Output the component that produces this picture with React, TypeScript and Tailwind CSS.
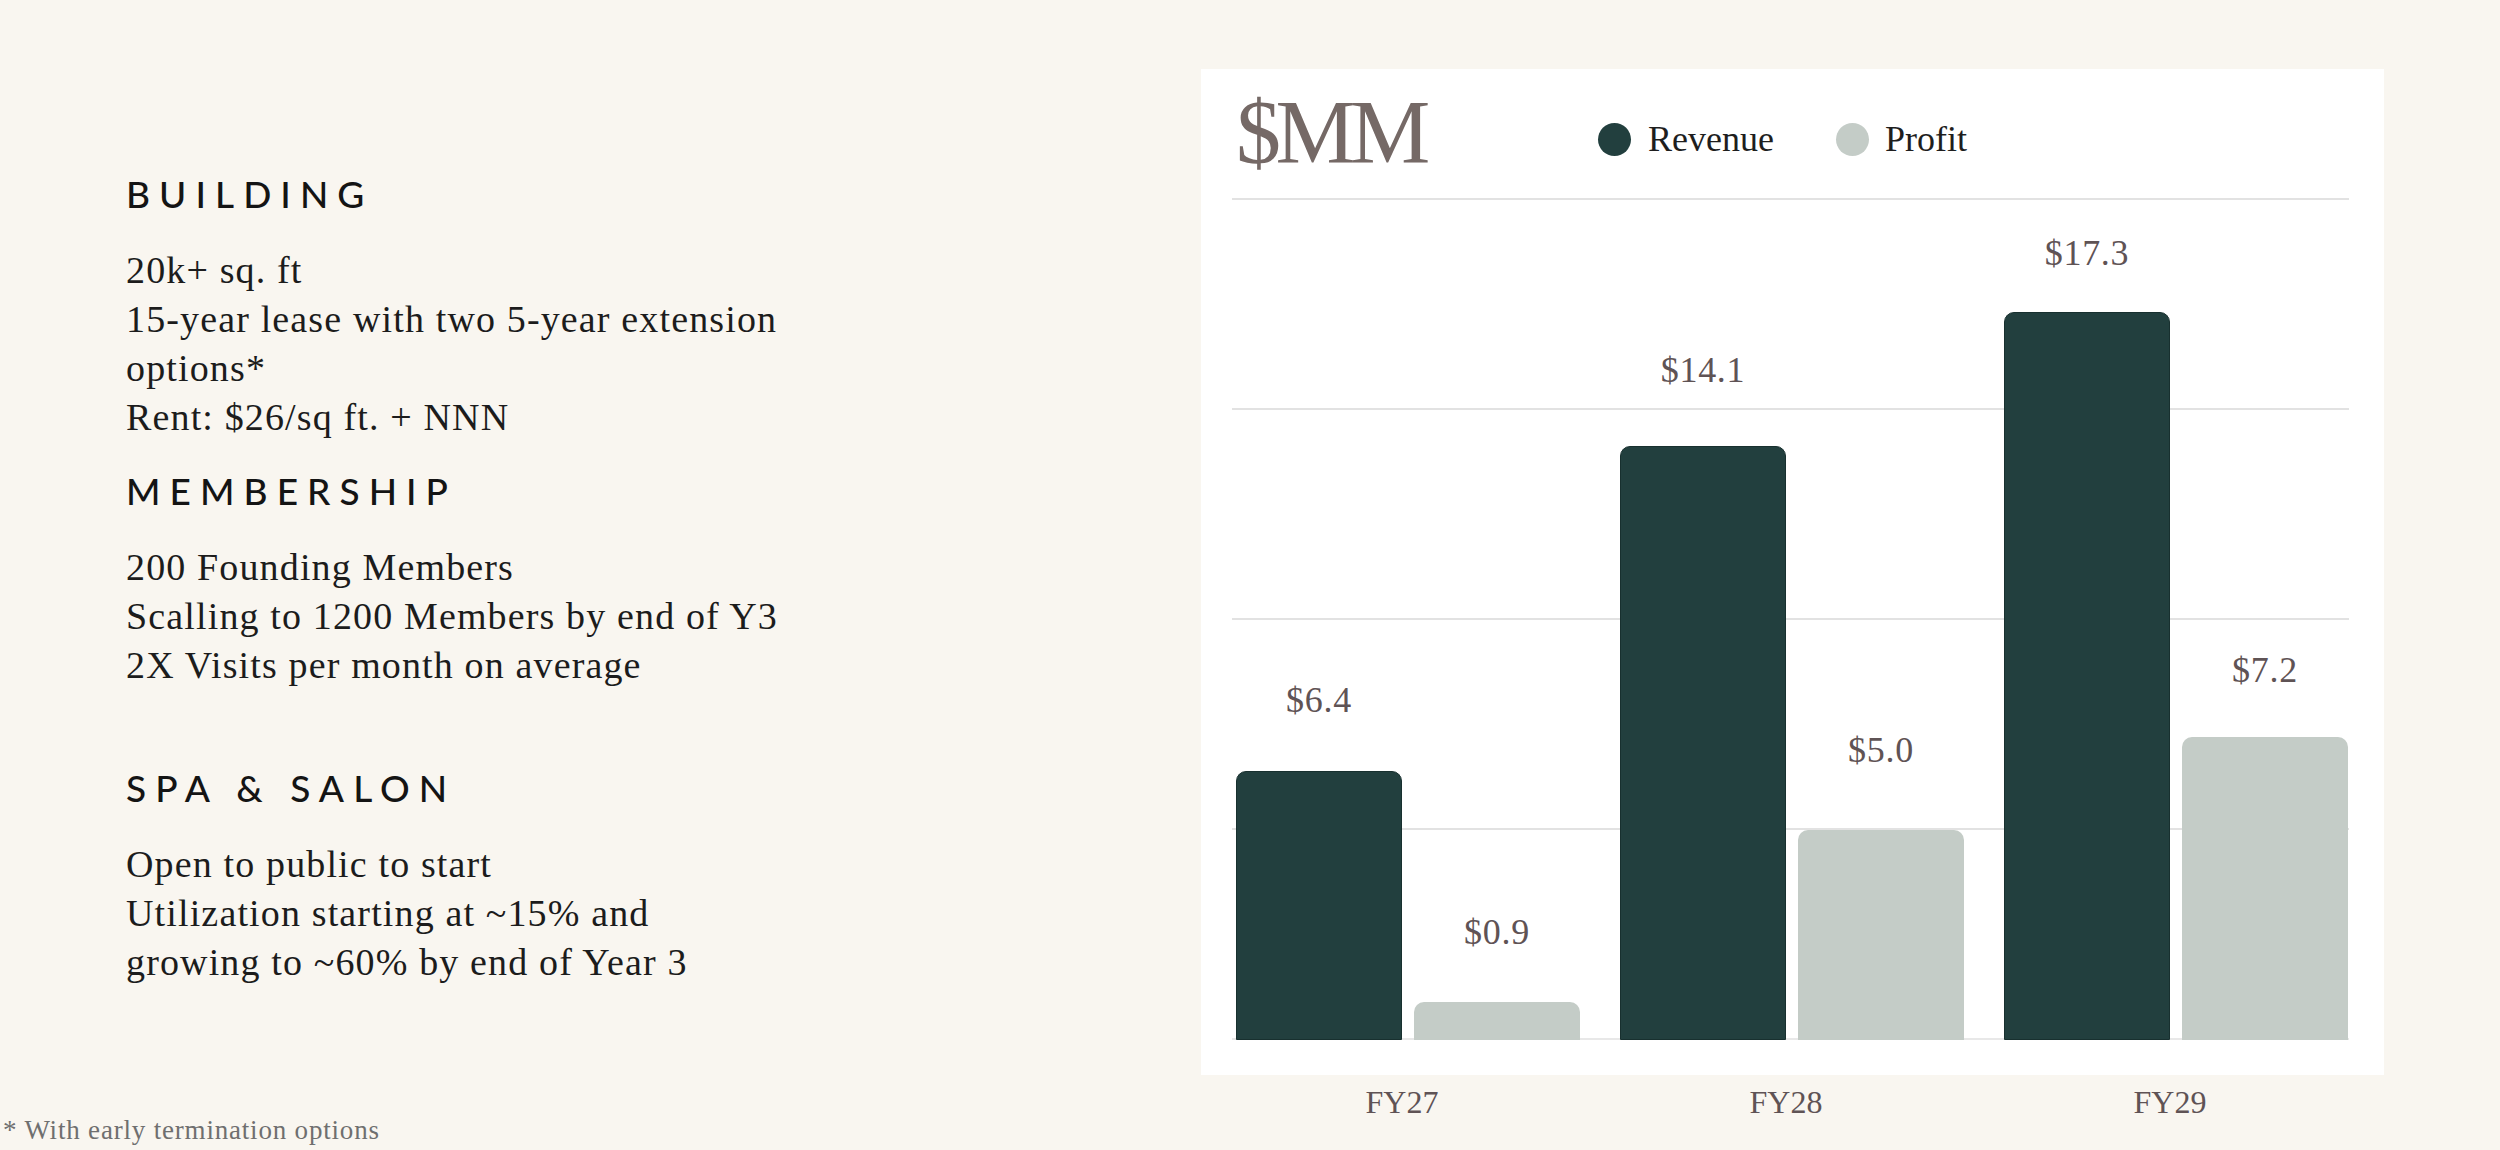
const sections = [
  {
    title: 'BUILDING',
    lines: ['20k+ sq. ft', '15-year lease with two 5-year extension', 'options*', 'Rent: $26/sq ft. + NNN'],
    gap: 'mt-0',
  },
  {
    title: 'MEMBERSHIP',
    lines: ['200 Founding Members', 'Scalling to 1200 Members by end of Y3', '2X Visits per month on average'],
    gap: 'mt-[27px]',
  },
  {
    title: 'SPA & SALON',
    lines: ['Open to public to start', 'Utilization starting at ~15% and', 'growing to ~60% by end of Year 3'],
    gap: 'mt-[76px]',
  },
];

// px per $1MM on the plot (842px tall plot = $20MM)
const SCALE = 42.1;

const years = [
  { label: 'FY27', revenue: 6.4, profit: 0.9, revGap: 51, proGap: 50 },
  { label: 'FY28', revenue: 14.1, profit: 5.0, revGap: 56, proGap: 60 },
  { label: 'FY29', revenue: 17.3, profit: 7.2, revGap: 39, proGap: 47 },
];

function Bar({ value, gap, dark }: { value: number; gap: number; dark: boolean }) {
  return (
    <div className="w-[166px] flex flex-col items-center">
      <span
        className="font-['Liberation_Serif',serif] text-[36px] leading-[40px] text-[#5f5355] tracking-[0.02em]"
        style={{ marginBottom: gap }}
      >
        ${value.toFixed(1)}
      </span>
      <div
        className={
          dark
            ? 'w-full rounded-t-[10px] bg-[#223f3e] border border-[#18302f]'
            : 'w-full rounded-t-[10px] bg-[#c4ccc7]'
        }
        style={{ height: value * SCALE }}
      />
    </div>
  );
}

export default function App() {
  return (
    <div className="w-[2500px] h-[1150px] bg-[#f9f6f0] flex overflow-hidden">
      <div className="w-[1201px] h-full flex flex-col pt-[172px]">
        <div className="pl-[126px] flex flex-col">
          {sections.map((section) => (
            <div key={section.title} className={section.gap}>
              <h2 className="font-['Lato',sans-serif] font-medium text-[37px] leading-[44px] tracking-[0.245em] text-[#141414]">
                {section.title}
              </h2>
              <div className="mt-[30px] font-['Liberation_Serif',serif] text-[38px] leading-[49px] tracking-[0.03em] text-[#1c1c1c]">
                {section.lines.map((line) => (
                  <p key={line}>{line}</p>
                ))}
              </div>
            </div>
          ))}
        </div>
        <p className="mt-auto pl-[3px] pb-[4px] font-['Liberation_Serif',serif] text-[27px] leading-[32px] tracking-[0.03em] text-[#6f6f6f]">
          * With early termination options
        </p>
      </div>

      <div className="w-[1183px] pt-[69px] flex flex-col">
        <div className="bg-white px-[35px] pt-[19px] pb-[35px] flex flex-col">
          <div className="h-[110px] flex items-start">
            <div className="w-[362px] font-['Liberation_Serif',serif] text-[90px] leading-none tracking-[-0.06em] text-[#756966]">
              $MM
            </div>
            <div className="mt-[31px] h-[40px] flex items-center font-['Liberation_Serif',serif] text-[36px] leading-[40px] text-[#1e1e1e]">
              <span className="w-[33px] h-[33px] rounded-full bg-[#223f3e]" />
              <span className="ml-[17px]">Revenue</span>
              <span className="ml-[62px] w-[33px] h-[33px] rounded-full bg-[#c4ccc7]" />
              <span className="ml-[16px]">Profit</span>
            </div>
          </div>

          <div className="relative h-[842px]">
            <div className="absolute inset-y-0 -left-[4px] right-0 flex flex-col justify-between">
              <div className="h-[2px] bg-[#e2e2e2]" />
              <div className="h-[2px] bg-[#e2e2e2]" />
              <div className="h-[2px] bg-[#e2e2e2]" />
              <div className="h-[2px] bg-[#e2e2e2]" />
              <div className="h-[2px] bg-[#e8e8e8]" />
            </div>
            <div className="relative h-full flex items-end gap-[40px]">
              {years.map((year) => (
                <div key={year.label} className="w-[344px] flex items-end gap-[12px]">
                  <Bar value={year.revenue} gap={year.revGap} dark />
                  <Bar value={year.profit} gap={year.proGap} dark={false} />
                </div>
              ))}
            </div>
          </div>
        </div>

        <div className="mt-[7px] px-[35px] flex gap-[40px]">
          {years.map((year) => (
            <div key={year.label} className="w-[344px]">
              <p className="w-[332px] text-center font-['Liberation_Serif',serif] text-[32px] leading-[40px] text-[#5f5355]">
                {year.label}
              </p>
            </div>
          ))}
        </div>
      </div>
    </div>
  );
}
